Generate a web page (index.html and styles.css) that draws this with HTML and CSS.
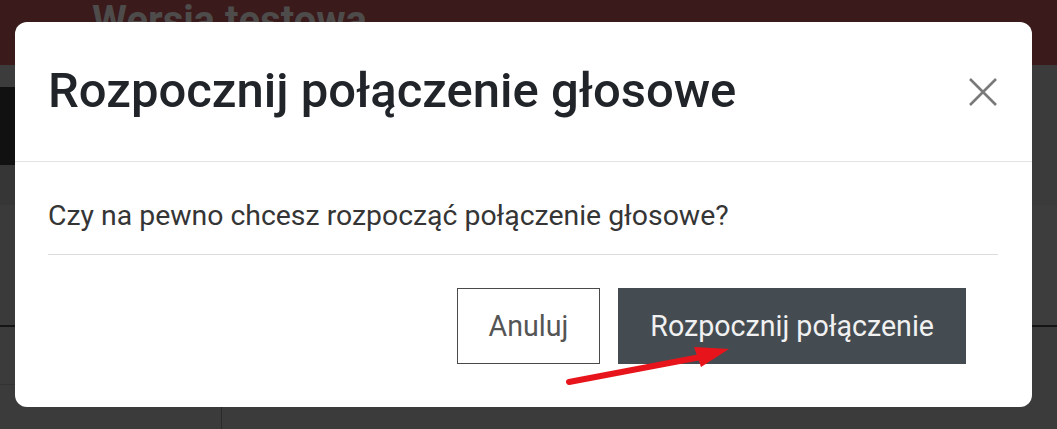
FILE: index.html
```html
<!DOCTYPE html>
<html lang="pl">
<head>
<meta charset="utf-8">
<title>Rozpocznij połączenie głosowe</title>
<link rel="stylesheet" href="styles.css">
</head>
<body>
<div class="page">
  <header class="topbar">
    <span class="topbar-title">Wersja testowa</span>
  </header>
  <div class="app">
    <aside class="sidebar">
      <div class="side-tools"></div>
      <div class="side-nav"></div>
      <div class="side-sub"></div>
      <div class="side-list"></div>
      <div class="side-item"></div>
      <div class="side-foot"><span class="caret"></span></div>
    </aside>
    <main class="content">
      <div class="content-top"></div>
      <div class="content-mid"></div>
      <div class="content-low"></div>
    </main>
  </div>

  <div class="modal" role="dialog">
    <div class="modal-header">
      <h1 class="modal-title">Rozpocznij połączenie głosowe</h1>
      <button class="close" aria-label="Zamknij">
        <svg width="28" height="28" viewBox="0 0 28 28"><path d="M1 1 L27 27 M27 1 L1 27" stroke="#7a7a7a" stroke-width="2.6" fill="none"/></svg>
      </button>
    </div>
    <div class="modal-body">
      <p class="body-text">Czy na pewno chcesz rozpocząć połączenie głosowe?</p>
    </div>
    <div class="modal-footer">
      <button class="btn btn-outline">Anuluj</button>
      <button class="btn btn-dark">Rozpocznij połączenie</button>
    </div>
  </div>

  <svg class="arrow" width="1057" height="429" viewBox="0 0 1057 429">
    <line x1="569" y1="382" x2="706" y2="356" stroke="#e8141b" stroke-width="6" stroke-linecap="round"/>
    <polygon points="694,347 729,349 701,367" fill="#e8141b"/>
  </svg>
</div>
</body>
</html>
```

FILE: styles.css
```css
* { box-sizing: border-box; }
html, body { margin: 0; padding: 0; }
body {
  width: 1057px;
  height: 429px;
  overflow: hidden;
  background: #3b3b3b;
  font-family: Roboto, "Liberation Sans", Arial, sans-serif;
}
.page {
  position: relative;
  width: 1057px;
  height: 429px;
  overflow: hidden;
  display: flex;
  flex-direction: column;
}
.topbar {
  height: 65px;
  background: #3a1a1b;
  padding-left: 92px;
  flex: none;
}
.topbar-title {
  display: block;
  font-family: Roboto, "Liberation Sans", sans-serif;
  font-weight: 700;
  font-size: 40px;
  line-height: 40px;
  margin-top: 1px;
  color: #4e4b4b;
}
.app {
  flex: 1;
  display: flex;
}
.sidebar {
  width: 222px;
  display: flex;
  flex-direction: column;
  border-right: 1px solid #2a2a2a;
  flex: none;
}
.side-tools { height: 22px; background: #3c3c3c; }
.side-nav { height: 78px; background: #111111; }
.side-sub { height: 40px; background: #363636; }
.side-list { height: 122px; background: #3a3a3a; border-bottom: 2px solid #151515; }
.side-item { height: 58px; background: #3b3b3b; border-bottom: 1px solid #333; }
.side-foot { flex: 1; background: #3b3b3b; display: flex; justify-content: flex-end; padding: 11px 21px 0 0; }
.caret {
  width: 0; height: 0;
  border-left: 10px solid transparent;
  border-right: 10px solid transparent;
  border-top: 10px solid #1e1e1e;
}
.content { flex: 1; display: flex; flex-direction: column; }
.content-top { height: 140px; background: #3b3b3b; }
.content-mid { height: 122px; background: #3d3d3d; border-bottom: 2px solid #151515; }
.content-low { flex: 1; background: #3b3b3b; }

.modal {
  position: absolute;
  left: 15px;
  top: 22px;
  width: 1017px;
  height: 385px;
  background: #ffffff;
  border-radius: 12px;
  display: flex;
  flex-direction: column;
}
.modal-header {
  height: 140px;
  padding: 0 35px 0 33px;
  display: flex;
  align-items: center;
  justify-content: space-between;
  border-bottom: 1px solid #e4e4e4;
  flex: none;
}
.modal-title {
  margin: 0;
  font-family: Roboto, "Liberation Sans", sans-serif;
  font-weight: 500;
  font-size: 49px;
  line-height: 1.2;
  color: #212529;
}
.close {
  background: none;
  border: 0;
  padding: 0;
  width: 28px;
  height: 28px;
  display: flex;
}
.modal-body {
  padding: 0 34px 0 33px;
  flex: none;
}
.body-text {
  margin: 0;
  height: 93px;
  padding-top: 14px;
  display: flex;
  align-items: center;
  border-bottom: 1px solid #dcdcdc;
  font-size: 28.4px;
  color: #353535;
}
.modal-footer {
  flex: 1;
  display: flex;
  justify-content: flex-end;
  align-items: flex-start;
  gap: 18px;
  padding: 33px 66px 0 0;
}
.btn {
  height: 76px;
  padding: 0 31px;
  font-family: Roboto, "Liberation Sans", sans-serif;
  font-size: 28.6px;
  border-radius: 0;
  display: flex;
  align-items: center;
}
.btn-outline {
  background: #ffffff;
  border: 1px solid #4a4a4a;
  color: #555555;
}
.btn-dark {
  background: #444c51;
  border: 1px solid #444c51;
  color: #f1f1f1;
}
.arrow {
  position: absolute;
  left: 0;
  top: 0;
  pointer-events: none;
}
```
